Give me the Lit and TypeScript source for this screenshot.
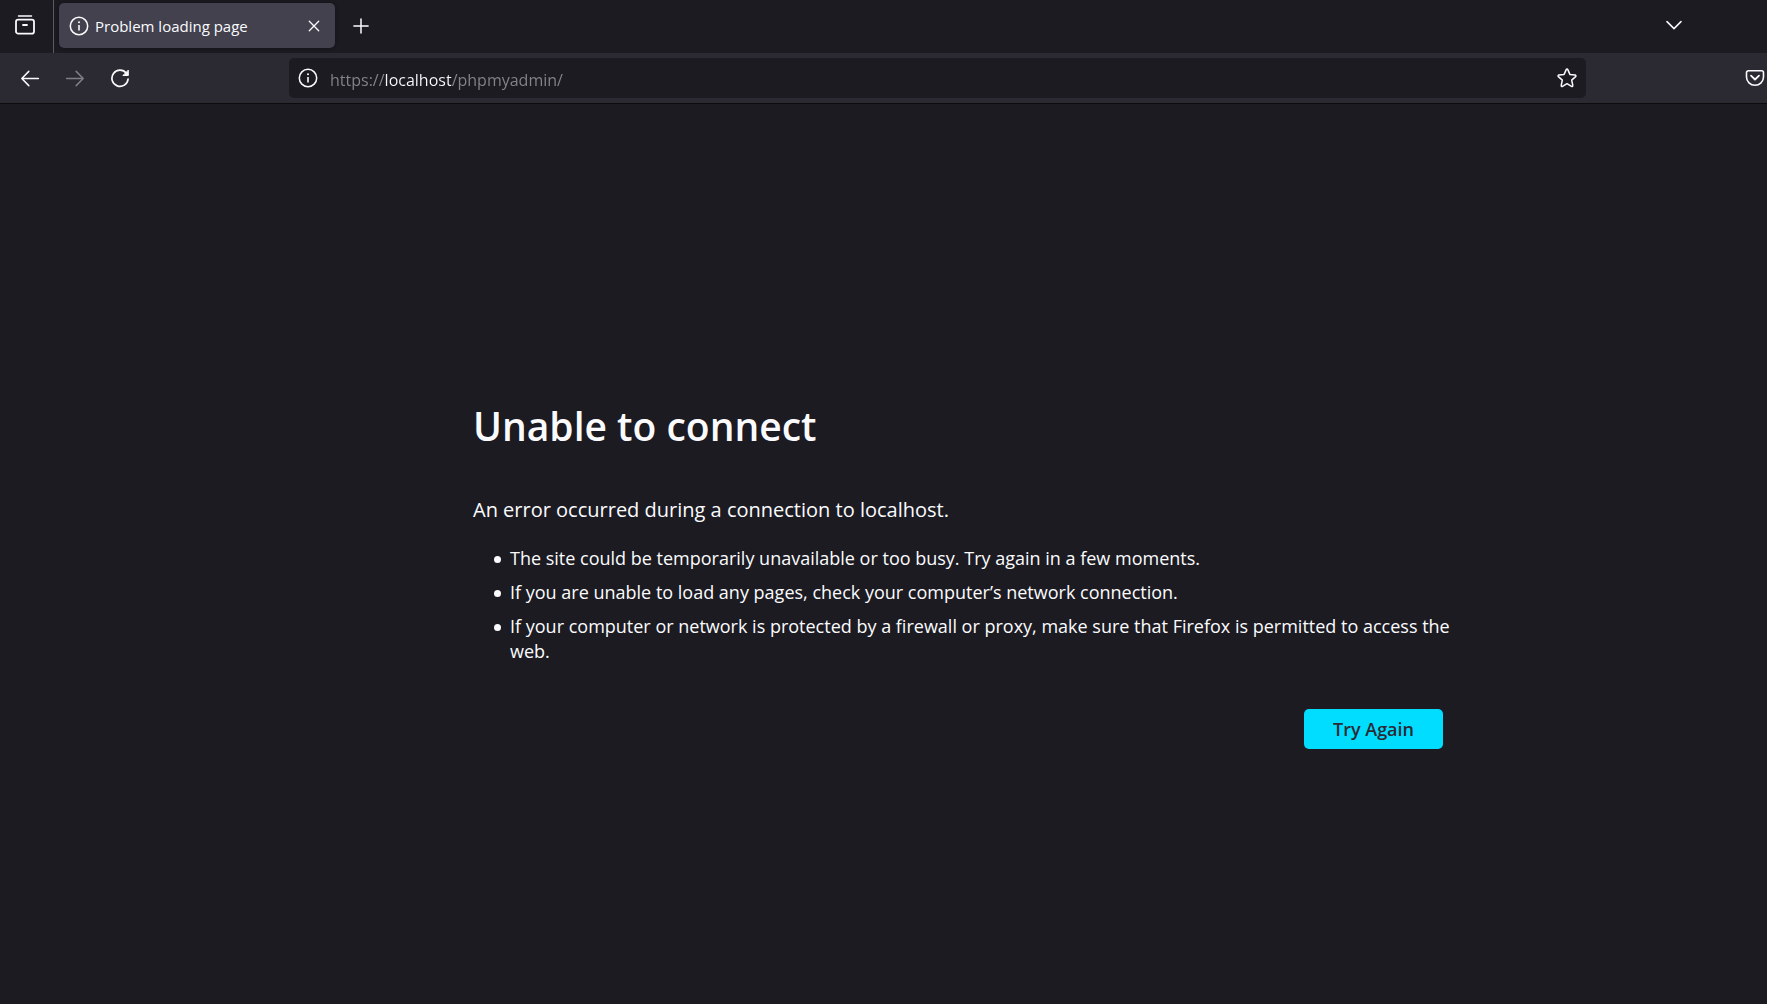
import { LitElement, html, css, svg } from "lit";
import { customElement, state } from "lit/decorators.js";

const line = (size: number, body: unknown) => html`<svg
  width=${size} height=${size} viewBox="0 0 ${size} ${size}"
  fill="none" stroke="currentColor" stroke-width="1.5"
  stroke-linecap="round" stroke-linejoin="round" aria-hidden="true"
>${body}</svg>`;

const icons = {
  archive: line(20, svg`<path d="M3.5 1h13" stroke-width="1.5"/><rect x="1" y="4.6" width="18" height="14" rx="2.2" stroke-width="1.8"/><path d="M8 10h4" stroke-width="1.8"/>`),
  info: line(20, svg`<circle cx="10" cy="10" r="8.7"/><path d="M10 9v5.4" stroke-width="1.6" stroke-linecap="butt"/><circle cx="10" cy="6.3" r="1" fill="currentColor" stroke="none"/>`),
  close: line(12, svg`<path d="M1.3 1.3l9.4 9.4M10.7 1.3l-9.4 9.4" stroke-width="1.3"/>`),
  plus: line(16, svg`<path d="M8 .9v14.2M.9 8h14.2"/>`),
  chevron: line(16, svg`<path d="M1 3.6l7 7 7-7"/>`),
  back: line(20, svg`<path d="M18.4 10.5H2M8.8 3.4L1.8 10.5l7 7.1"/>`),
  forward: line(20, svg`<path d="M1.6 10.5H18M11.2 3.4l7 7.1-7 7.1"/>`),
  reload: line(20, svg`<path d="M16.4 5.3A8.1 8.1 0 1 0 18.1 11" stroke-width="1.7"/><path d="M18.3 2.5v5h-5z" fill="currentColor" stroke-width="1"/>`),
  star: line(20, svg`<path d="M9.2 1.6c.3-.7 1.3-.7 1.6 0l2.1 4.8 5.2.6c.8.1 1.1 1 .5 1.6l-3.9 3.5 1.1 5.4c.2.8-.6 1.3-1.3.9L10 15.7l-4.5 2.7c-.7.4-1.5-.1-1.3-.9l1.1-5.4L1.4 8.6C.8 8 1.1 7.1 1.9 7l5.2-.6z"/>`),
  pocket: line(20, svg`<path d="M3.4 2.8h13.2a1.9 1.9 0 0 1 1.9 1.9V9a8.5 8.3 0 0 1-17 0V4.7a1.9 1.9 0 0 1 1.9-1.9z" stroke-width="1.6"/><path d="M6 7.6l4 3.9 4-3.9" stroke-width="1.8"/>`),
};

@customElement("app-root")
export class AppRoot extends LitElement {
  @state() private url = "https://localhost/phpmyadmin/";

  static styles = css`
    :host {
      display: flex;
      flex-direction: column;
      min-height: 100vh;
      background: #1c1b22;
      color: #fbfbfe;
      font-family: "Open Sans", "Noto Sans", sans-serif;
    }
    * { box-sizing: border-box; }
    svg { display: block; flex: none; }
    button {
      border: 0;
      padding: 0;
      background: none;
      color: inherit;
      font: inherit;
    }
    .icon-button {
      display: grid;
      place-items: center;
      width: 45px;
      height: 40px;
      border-radius: 5px;
    }
    .icon-button:disabled { opacity: 0.4; }
    .icon-button.small { width: 30px; height: 30px; }
    .icon-button.edge { width: 24px; }
    .tabs {
      display: flex;
      align-items: flex-start;
      height: 53px;
      padding-top: 3px;
    }
    .tabs .icon-button { height: 45px; }
    .view {
      height: 53px;
      margin-top: -3px;
      padding: 2px 6px 0 2px;
      border-right: 1px solid #5c5b63;
    }
    .tab {
      display: flex;
      align-items: center;
      gap: 6px;
      width: 276px;
      height: 45px;
      margin: 0 3px 0 5px;
      padding: 0 6px 0 10px;
      border-radius: 5px;
      background: #42414d;
      box-shadow: 0 0 4px rgb(0 0 0 / 40%);
      font-size: 15px;
    }
    .title {
      flex: 1;
      white-space: nowrap;
    }
    .all-tabs { margin: 0 71px 0 auto; }
    .toolbar {
      display: flex;
      align-items: center;
      height: 51px;
      padding-left: 7px;
      background: #2b2a33;
      border-bottom: 1px solid #0c0c0d;
    }
    .space-before { flex: 30; }
    .space-after { flex: 32; }
    .address {
      display: flex;
      align-items: center;
      flex: 262;
      height: 40px;
      padding: 0 4px 0 9px;
      border-radius: 5px;
      background: #1c1b22;
    }
    .url {
      flex: 1;
      min-width: 0;
      margin-left: 12px;
      padding: 3px 0 0;
      border: 0;
      outline: 0;
      height: 32px;
      font: 16px "Open Sans", "Noto Sans", sans-serif;
      color: transparent;
      caret-color: #fbfbfe;
      background: linear-gradient(90deg, #85848b 55px, #fbfbfe 55px 122px, #85848b 122px);
      background-clip: text;
      -webkit-background-clip: text;
    }
    main {
      flex: 1;
      display: grid;
      grid-template-columns: 473fr minmax(auto, 970px) 324fr;
      align-content: center;
      padding-top: 38px;
    }
    .error { grid-column: 2; }
    h1 {
      margin: 0 0 40px;
      font-size: 39px;
      line-height: 56px;
      font-weight: 600;
    }
    .lead {
      margin: 0 0 20px;
      font-size: 20px;
      line-height: 32px;
    }
    ul {
      display: grid;
      gap: 9px;
      margin: 0 -8px 0 0;
      padding: 0 0 0 21px;
      list-style: none;
      font-size: 18px;
      line-height: 25px;
    }
    li {
      display: grid;
      grid-template-columns: 16px 1fr;
    }
    li::before {
      content: "";
      width: 7px;
      height: 7px;
      margin-top: 10px;
      border-radius: 50%;
      background: currentColor;
    }
    .actions {
      display: flex;
      justify-content: flex-end;
      margin-top: 45px;
    }
    .retry {
      min-width: 139px;
      height: 40px;
      padding: 0 28px;
      border-radius: 5px;
      background: #00ddff;
      color: #2b2a33;
      font-size: 18px;
      font-weight: 600;
    }
  `;

  render() {
    return html`
      <header>
        <div class="tabs">
          <div class="view">
            <button class="icon-button" aria-label="View">${icons.archive}</button>
          </div>
          <div class="tab">
            ${icons.info}
            <span class="title">Problem loading page</span>
            <button class="icon-button small" aria-label="Close tab">${icons.close}</button>
          </div>
          <button class="icon-button" aria-label="New tab">${icons.plus}</button>
          <button class="icon-button all-tabs" aria-label="List all tabs">${icons.chevron}</button>
        </div>
        <nav class="toolbar">
          <button class="icon-button" aria-label="Back">${icons.back}</button>
          <button class="icon-button" aria-label="Forward" disabled>${icons.forward}</button>
          <button class="icon-button" aria-label="Reload">${icons.reload}</button>
          <span class="space-before"></span>
          <div class="address">
            ${icons.info}
            <input class="url" type="text" aria-label="Address" spellcheck="false"
              .value=${this.url}
              @change=${(e: Event) => (this.url = (e.target as HTMLInputElement).value)} />
            <button class="icon-button small" aria-label="Bookmark this page">${icons.star}</button>
          </div>
          <span class="space-after"></span>
          <button class="icon-button small edge" aria-label="Save to Pocket">${icons.pocket}</button>
        </nav>
      </header>
      <main>
        <section class="error">
          <h1>Unable to connect</h1>
          <p class="lead">An error occurred during a connection to localhost.</p>
          <ul>
            <li>The site could be temporarily unavailable or too busy. Try again in a few moments.</li>
            <li>If you are unable to load any pages, check your computer’s network connection.</li>
            <li>If your computer or network is protected by a firewall or proxy, make sure that Firefox is permitted to access the web.</li>
          </ul>
          <div class="actions"><button class="retry">Try Again</button></div>
        </section>
      </main>
    `;
  }
}
